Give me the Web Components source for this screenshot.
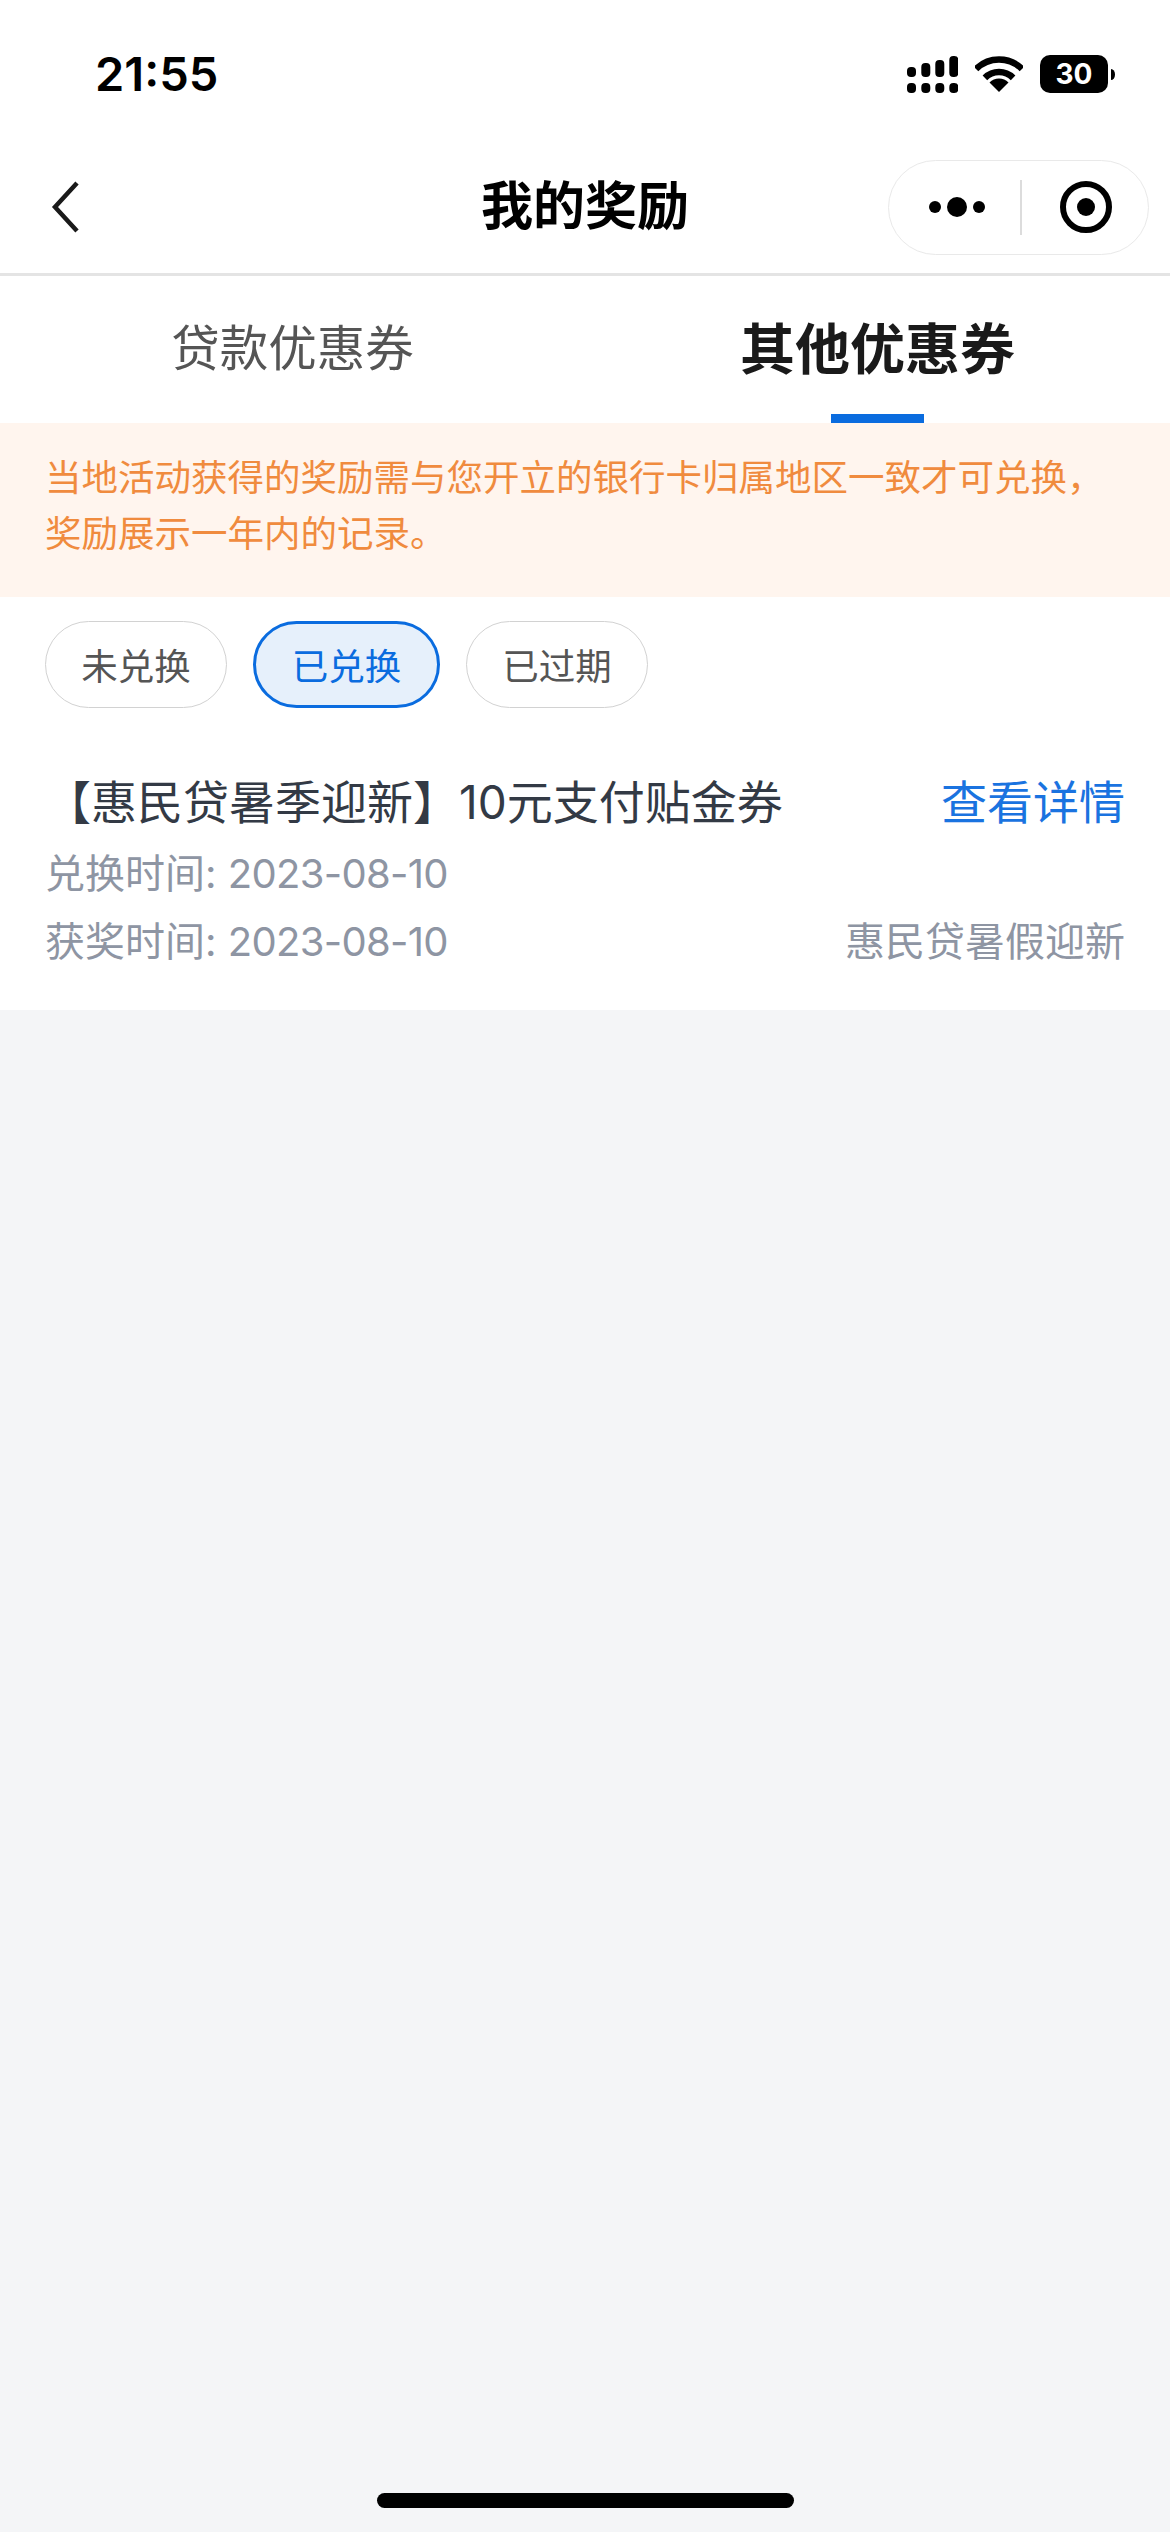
<!DOCTYPE html>
<html lang="zh-CN">
<head>
<meta charset="utf-8">
<title>我的奖励</title>
<style>
  html, body { margin: 0; padding: 0; }
  body { background: #f4f5f7; font-family: Inter, "Noto Sans CJK SC", sans-serif; }
  .date { letter-spacing: -0.7px; }
</style>
</head>
<body>
<reward-page>
  <status-bar time="21:55" battery="30"></status-bar>
  <nav-bar>我的奖励</nav-bar>
  <tab-bar>
    <tab-item>贷款优惠券</tab-item>
    <tab-item active>其他优惠券</tab-item>
  </tab-bar>
  <notice-banner>当地活动获得的奖励需与您开立的银行卡归属地区一致才可兑换，<br>奖励展示一年内的记录。</notice-banner>
  <filter-row>
    <filter-pill>未兑换</filter-pill>
    <filter-pill active>已兑换</filter-pill>
    <filter-pill>已过期</filter-pill>
  </filter-row>
  <reward-card>
    <span slot="title">【惠民贷暑季迎新】10元支付贴金券</span>
    <span slot="link">查看详情</span>
    <span slot="redeemed">兑换时间: <span class="date">2023-08-10</span></span>
    <span slot="won">获奖时间: <span class="date">2023-08-10</span></span>
    <span slot="source">惠民贷暑假迎新</span>
  </reward-card>
  <home-indicator></home-indicator>
</reward-page>

<script>
const CN = `Inter, "Noto Sans CJK SC", sans-serif`;

class RewardPage extends HTMLElement {
  constructor() {
    super();
    this.attachShadow({ mode: 'open' });
    this.shadowRoot.innerHTML = `
      <style>
        :host {
          display: flex;
          flex-direction: column;
          width: 1170px;
          height: 2532px;
          background: #f4f5f7;
          font-family: ${CN};
          overflow: hidden;
        }
      </style>
      <slot></slot>
    `;
  }
}

class StatusBar extends HTMLElement {
  constructor() {
    super();
    this.attachShadow({ mode: 'open' });
    this.shadowRoot.innerHTML = `
      <style>
        :host {
          display: flex;
          align-items: center;
          justify-content: space-between;
          box-sizing: border-box;
          height: 148px;
          padding: 0 55px 0 95px;
          background: #fff;
          color: #000;
        }
        .time {
          font-size: 47px;
          font-weight: 600;
          line-height: 56px;
        }
        .icons { display: flex; align-items: center; }
        .wifi { margin-left: 17px; }
        .battery {
          display: flex;
          align-items: center;
          justify-content: center;
          width: 68px;
          height: 38px;
          margin-left: 17px;
          border-radius: 10px;
          background: #000;
          color: #fff;
          font-size: 28px;
          font-weight: 700;
          line-height: 38px;
        }
        .nub { margin-left: 3px; }
        svg { display: block; }
      </style>
      <div class="time"></div>
      <div class="icons">
        <svg width="51" height="37" viewBox="0 0 51 37" fill="#000">
          <rect x="0" y="11" width="9" height="10" rx="4"/>
          <rect x="14.3" y="7" width="9" height="14" rx="4"/>
          <rect x="28.3" y="4" width="9" height="17" rx="4"/>
          <rect x="42.3" y="0" width="9" height="21" rx="4"/>
          <rect x="0" y="27" width="9" height="10" rx="4"/>
          <rect x="14.3" y="27" width="9" height="10" rx="4"/>
          <rect x="28.3" y="27" width="9" height="10" rx="4"/>
          <rect x="42.3" y="27" width="9" height="10" rx="4"/>
        </svg>
        <svg class="wifi" width="48" height="36" viewBox="0 0 48 36">
          <path d="M1 13 A32.5 32.5 0 0 1 47 13" fill="none" stroke="#000" stroke-width="6.5"/>
          <path d="M9.9 21.9 A20 20 0 0 1 38.1 21.9" fill="none" stroke="#000" stroke-width="6.5"/>
          <path d="M24 36 L14.5 26.5 A13.4 13.4 0 0 1 33.5 26.5 Z" fill="#000"/>
        </svg>
        <div class="battery"></div>
        <svg class="nub" width="4" height="11" viewBox="0 0 4 11"><path d="M0 0 A4 5.5 0 0 1 0 11 Z" fill="#000"/></svg>
      </div>
    `;
  }

  connectedCallback() {
    this.shadowRoot.querySelector('.time').textContent = this.getAttribute('time') || '';
    this.shadowRoot.querySelector('.battery').textContent = this.getAttribute('battery') || '';
  }
}

class NavBar extends HTMLElement {
  constructor() {
    super();
    this.attachShadow({ mode: 'open' });
    this.shadowRoot.innerHTML = `
      <style>
        :host {
          display: grid;
          grid-template-columns: 1fr auto 1fr;
          align-items: center;
          box-sizing: border-box;
          height: 128px;
          padding: 0 21px 7px;
          border-bottom: 3px solid #e4e4e4;
          background: #fff;
          color: #000;
        }
        .back { display: block; margin-left: 29px; }
        .title {
          font-size: 52px;
          font-weight: 700;
          line-height: 70px;
        }
        .capsule {
          justify-self: end;
          display: flex;
          align-items: center;
          box-sizing: border-box;
          width: 261px;
          height: 95px;
          border: 1.5px solid #e9e9e9;
          border-radius: 48px;
        }
        .half { flex: 1; display: flex; align-items: center; justify-content: center; }
        .dots { padding-left: 6px; }
        .mini { padding-left: 2px; }
        .sep { width: 2px; height: 55px; background: #dcdcdc; }
        svg { display: block; }
      </style>
      <svg class="back" width="32" height="54" viewBox="0 0 32 54">
        <path d="M27 3 L5 27 L27 51" fill="none" stroke="#1a1a1a" stroke-width="4.5"/>
      </svg>
      <div class="title"><slot></slot></div>
      <div class="capsule">
        <div class="half dots">
          <svg width="56" height="20" viewBox="0 0 56 20" fill="#000">
            <circle cx="6" cy="10" r="6"/>
            <circle cx="28" cy="10" r="10"/>
            <circle cx="50" cy="10" r="6"/>
          </svg>
        </div>
        <div class="sep"></div>
        <div class="half mini">
          <svg width="52" height="52" viewBox="0 0 52 52">
            <circle cx="26" cy="26" r="23" fill="none" stroke="#000" stroke-width="6"/>
            <circle cx="26" cy="26" r="9" fill="#000"/>
          </svg>
        </div>
      </div>
    `;
  }
}

class TabBar extends HTMLElement {
  constructor() {
    super();
    this.attachShadow({ mode: 'open' });
    this.shadowRoot.innerHTML = `
      <style>
        :host { display: flex; background: #fff; }
      </style>
      <slot></slot>
    `;
  }
}

class TabItem extends HTMLElement {
  constructor() {
    super();
    this.attachShadow({ mode: 'open' });
    this.shadowRoot.innerHTML = `
      <style>
        :host {
          flex: 1;
          display: flex;
          flex-direction: column;
          align-items: center;
          padding-top: 43px;
          color: #555;
          font-size: 48.5px;
          line-height: 60px;
        }
        :host([active]) {
          color: #1a1a1a;
          font-size: 55px;
          font-weight: 700;
        }
        .bar { width: 93px; height: 9px; margin-top: 35px; }
        :host([active]) .bar { background: #0a6cdf; }
      </style>
      <div><slot></slot></div>
      <div class="bar"></div>
    `;
  }
}

class NoticeBanner extends HTMLElement {
  constructor() {
    super();
    this.attachShadow({ mode: 'open' });
    this.shadowRoot.innerHTML = `
      <style>
        :host {
          display: block;
          padding: 27px 45px 35px;
          background: #fff5ee;
          color: #f08b3e;
          font-size: 36.5px;
          line-height: 56px;
          white-space: nowrap;
        }
      </style>
      <slot></slot>
    `;
  }
}

class FilterRow extends HTMLElement {
  constructor() {
    super();
    this.attachShadow({ mode: 'open' });
    this.shadowRoot.innerHTML = `
      <style>
        :host {
          display: flex;
          gap: 26px;
          padding: 24px 45px 0;
          background: #fff;
        }
      </style>
      <slot></slot>
    `;
  }
}

class FilterPill extends HTMLElement {
  constructor() {
    super();
    this.attachShadow({ mode: 'open' });
    this.shadowRoot.innerHTML = `
      <style>
        :host {
          display: flex;
          align-items: center;
          box-sizing: border-box;
          height: 87px;
          padding: 0 35.25px;
          border: 1.5px solid #d2d2d2;
          border-radius: 44px;
          color: #555;
          font-size: 36.5px;
        }
        :host([active]) {
          padding: 0 35.75px;
          border: 3px solid #0a6cdf;
          background: #e6f0fb;
          color: #0a6cdf;
        }
      </style>
      <slot></slot>
    `;
  }
}

class RewardCard extends HTMLElement {
  constructor() {
    super();
    this.attachShadow({ mode: 'open' });
    this.shadowRoot.innerHTML = `
      <style>
        :host {
          display: flex;
          flex-direction: column;
          padding: 64px 45px 38px;
          background: #fff;
          color: #8e95a3;
          font-size: 40px;
          line-height: 60px;
        }
        .row { display: flex; justify-content: space-between; }
        .head { color: #333a45; font-size: 46px; margin-bottom: 12px; }
        .link { color: #1a73e0; }
        .won { margin-top: 8px; }
      </style>
      <div class="row head"><slot name="title"></slot><span class="link"><slot name="link"></slot></span></div>
      <div class="row"><slot name="redeemed"></slot></div>
      <div class="row won"><slot name="won"></slot><slot name="source"></slot></div>
    `;
  }
}

class HomeIndicator extends HTMLElement {
  constructor() {
    super();
    this.attachShadow({ mode: 'open' });
    this.shadowRoot.innerHTML = `
      <style>
        :host {
          display: flex;
          justify-content: center;
          margin-top: auto;
          padding-bottom: 24px;
        }
        .bar { width: 417px; height: 15px; border-radius: 8px; background: #000; }
      </style>
      <div class="bar"></div>
    `;
  }
}

customElements.define('reward-page', RewardPage);
customElements.define('status-bar', StatusBar);
customElements.define('nav-bar', NavBar);
customElements.define('tab-bar', TabBar);
customElements.define('tab-item', TabItem);
customElements.define('notice-banner', NoticeBanner);
customElements.define('filter-row', FilterRow);
customElements.define('filter-pill', FilterPill);
customElements.define('reward-card', RewardCard);
customElements.define('home-indicator', HomeIndicator);
</script>
</body>
</html>
